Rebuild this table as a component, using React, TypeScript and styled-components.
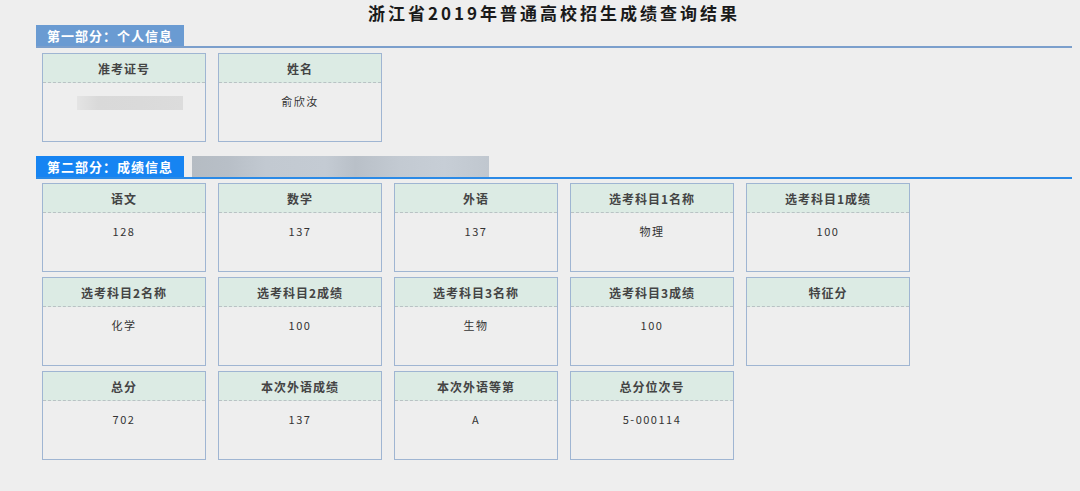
import React from "react";
import styled, { createGlobalStyle } from "styled-components";

const GlobalStyle = createGlobalStyle`
  html, body {
    margin: 0;
    padding: 0;
    background: #eeeeee;
    font-family: "Noto Sans CJK SC", "Noto Sans", sans-serif;
  }
`;

const Page = styled.div`
  width: 1036px;
  padding: 0 0 0 36px;
  height: 491px;
  box-sizing: content-box;
`;

const Title = styled.h1`
  margin: 0;
  height: 25px;
  line-height: 25px;
  text-align: center;
  font-size: 17px;
  font-weight: 700;
  letter-spacing: 3px;
  color: #1a1a1a;
`;

const SectionHead = styled.div<{ $line: string; $thick: number }>`
  display: flex;
  align-items: flex-end;
  gap: 8px;
  height: 21px;
  border-bottom: ${(p) => p.$thick}px solid ${(p) => p.$line};
`;

const Tab = styled.div<{ $bg: string }>`
  width: 148px;
  height: 21px;
  box-sizing: border-box;
  padding-left: 11px;
  background: ${(p) => p.$bg};
  color: #ffffff;
  font-size: 13px;
  font-weight: 700;
  letter-spacing: 1px;
  line-height: 21px;
  white-space: nowrap;
`;

const Blur = styled.div`
  width: 297px;
  height: 21px;
  background: linear-gradient(
    90deg,
    #b5bcc3 0%,
    #b8bfc7 12%,
    #c2c9d1 25%,
    #c4cbd3 45%,
    #b9c0c8 55%,
    #c3cad2 70%,
    #c7ced6 85%,
    #c0c7cf 100%
  );
`;

const Grid = styled.div<{ $top: number }>`
  display: grid;
  grid-template-columns: repeat(5, 164px);
  column-gap: 12px;
  row-gap: 5px;
  padding: ${(p) => p.$top}px 0 0 6px;
`;

const Card = styled.div`
  height: 89px;
  box-sizing: border-box;
  border: 1px solid #9fb5d2;
  background: #eeeeee;
  display: flex;
  flex-direction: column;
`;

const CardHead = styled.div`
  height: 28px;
  background: #dcebe4;
  border-bottom: 1px dashed #b9c2c4;
  display: flex;
  align-items: center;
  justify-content: center;
  font-size: 12px;
  font-weight: 700;
  letter-spacing: 1px;
  color: #444444;
`;

const CardValue = styled.div`
  padding-top: 10px;
  height: 16px;
  line-height: 16px;
  text-align: center;
  font-size: 11px;
  letter-spacing: 1.5px;
  color: #333333;
`;

const Masked = styled.div`
  width: 106px;
  height: 14px;
  margin: 13px 0 0 34px;
  background: linear-gradient(90deg, #e4e4e4 0%, #d9d9d9 20%, #dadada 60%, #dcdcdc 100%);
`;

const Section2 = styled.div`
  margin-top: 14px;
`;

const personal = [
  { k: "准考证号", v: null },
  { k: "姓名", v: "俞欣汝" },
];

const scores = [
  { k: "语文", v: "128" },
  { k: "数学", v: "137" },
  { k: "外语", v: "137" },
  { k: "选考科目1名称", v: "物理" },
  { k: "选考科目1成绩", v: "100" },
  { k: "选考科目2名称", v: "化学" },
  { k: "选考科目2成绩", v: "100" },
  { k: "选考科目3名称", v: "生物" },
  { k: "选考科目3成绩", v: "100" },
  { k: "特征分", v: "" },
  { k: "总分", v: "702" },
  { k: "本次外语成绩", v: "137" },
  { k: "本次外语等第", v: "A" },
  { k: "总分位次号", v: "5-000114" },
];

export default function App() {
  return (
    <>
      <GlobalStyle />
      <Page>
        <Title>浙江省2019年普通高校招生成绩查询结果</Title>
        <SectionHead $line="#7b9fcc" $thick={2}>
          <Tab $bg="#6a9bd2">第一部分：个人信息</Tab>
        </SectionHead>
        <Grid $top={5}>
          {personal.map((c) => (
            <Card key={c.k}>
              <CardHead>{c.k}</CardHead>
              {c.v === null ? <Masked /> : <CardValue>{c.v}</CardValue>}
            </Card>
          ))}
        </Grid>
        <Section2>
          <SectionHead $line="#2b8ae6" $thick={2}>
            <Tab $bg="#1684f2">第二部分：成绩信息</Tab>
            <Blur />
          </SectionHead>
          <Grid $top={4}>
            {scores.map((c) => (
              <Card key={c.k}>
                <CardHead>{c.k}</CardHead>
                <CardValue>{c.v}</CardValue>
              </Card>
            ))}
          </Grid>
        </Section2>
      </Page>
    </>
  );
}
